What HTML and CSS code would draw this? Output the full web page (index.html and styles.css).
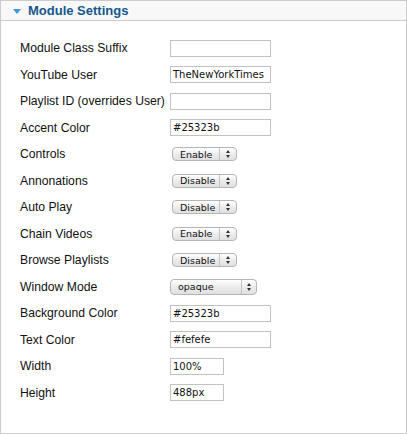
FILE: index.html
```html
<!DOCTYPE html>
<html lang="en">
<head>
    <meta charset="UTF-8">
    <meta name="viewport" content="width=device-width, initial-scale=1.0">
    <title>Module Settings</title>
    <link rel="stylesheet" href="styles.css">
</head>
<body>

    <div class="panel">
        <h3 class="panel-title">
            <span class="toggle"></span>
            Module Settings
        </h3>

        <div class="settings">
            <label class="row-label">Module Class Suffix</label>
            <div class="row-field"><input type="text" class="text-input" value=""></div>

            <label class="row-label">YouTube User</label>
            <div class="row-field"><input type="text" class="text-input" value="TheNewYorkTimes"></div>

            <label class="row-label">Playlist ID (overrides User)</label>
            <div class="row-field"><input type="text" class="text-input" value=""></div>

            <label class="row-label">Accent Color</label>
            <div class="row-field"><input type="text" class="text-input" value="#25323b"></div>

            <label class="row-label">Controls</label>
            <div class="row-field"><span class="select"><span class="select-value">Enable</span><span class="select-arrows"></span></span></div>

            <label class="row-label">Annonations</label>
            <div class="row-field"><span class="select"><span class="select-value">Disable</span><span class="select-arrows"></span></span></div>

            <label class="row-label">Auto Play</label>
            <div class="row-field"><span class="select"><span class="select-value">Disable</span><span class="select-arrows"></span></span></div>

            <label class="row-label">Chain Videos</label>
            <div class="row-field"><span class="select"><span class="select-value">Enable</span><span class="select-arrows"></span></span></div>

            <label class="row-label">Browse Playlists</label>
            <div class="row-field"><span class="select"><span class="select-value">Disable</span><span class="select-arrows"></span></span></div>

            <label class="row-label">Window Mode</label>
            <div class="row-field"><span class="select select-wide"><span class="select-value">opaque</span><span class="select-arrows"></span></span></div>

            <label class="row-label">Background Color</label>
            <div class="row-field"><input type="text" class="text-input" value="#25323b"></div>

            <label class="row-label">Text Color</label>
            <div class="row-field"><input type="text" class="text-input" value="#fefefe"></div>

            <label class="row-label">Width</label>
            <div class="row-field"><input type="text" class="text-input short" value="100%"></div>

            <label class="row-label">Height</label>
            <div class="row-field"><input type="text" class="text-input short" value="488px"></div>
        </div>
    </div>

</body>
</html>
```

FILE: styles.css
```css
body {
    margin: 0;
    font-family: "Liberation Sans", Arial, sans-serif;
    background-color: #fff;
}

.panel {
    width: 405px;
    height: 432px;
    border: 1px solid #cccccc;
    background-color: #fff;
}

.panel-title {
    margin: 0;
    height: 19px;
    padding-left: 12px;
    display: flex;
    align-items: center;
    gap: 7px;
    background-color: #f8f8f8;
    border-bottom: 1px solid #cccccc;
    color: #15588c;
    font-size: 13px;
    font-weight: bold;
}

.toggle {
    width: 0;
    height: 0;
    border-left: 4px solid transparent;
    border-right: 4px solid transparent;
    border-top: 5px solid #3b9ad6;
    margin-top: 1px;
}

.settings {
    display: grid;
    grid-template-columns: 150px 1fr;
    grid-auto-rows: 26.5px;
    padding: 14px 0 0 19px;
}

.row-label {
    display: flex;
    align-items: center;
    font-size: 12.2px;
    color: #111;
}

.row-field {
    display: flex;
    align-items: center;
}

.text-input {
    box-sizing: border-box;
    width: 101px;
    height: 17px;
    margin: 0;
    padding: 0 2px;
    border: 1px solid #c2c2c2;
    font-family: "DejaVu Sans", sans-serif;
    font-size: 10px;
    color: #111;
    outline: none;
}

.text-input.short {
    width: 54px;
}

.select {
    box-sizing: border-box;
    display: flex;
    align-items: stretch;
    width: 65px;
    height: 14px;
    margin-left: 2px;
    border: 1px solid #b5b5b5;
    border-radius: 4px;
    background: linear-gradient(#ffffff, #ececec 50%, #e0e0e0);
    font-family: "DejaVu Sans", sans-serif;
    font-size: 9.5px;
    color: #111;
}

.select-wide {
    width: 87px;
    height: 16px;
    margin-left: 0;
}

.select-value {
    flex: 1;
    display: flex;
    align-items: center;
    padding-left: 7px;
}

.select-arrows {
    position: relative;
    width: 16px;
    border-left: 1px solid #c4c4c4;
}

.select-wide .select-arrows {
    width: 14px;
}

.select-arrows::before,
.select-arrows::after {
    content: "";
    position: absolute;
    left: 50%;
    margin-left: -2px;
    border-left: 2px solid transparent;
    border-right: 2px solid transparent;
}

.select-arrows::before {
    top: 50%;
    margin-top: -4px;
    border-bottom: 3px solid #333;
}

.select-arrows::after {
    top: 50%;
    margin-top: 1px;
    border-top: 3px solid #333;
}
```
